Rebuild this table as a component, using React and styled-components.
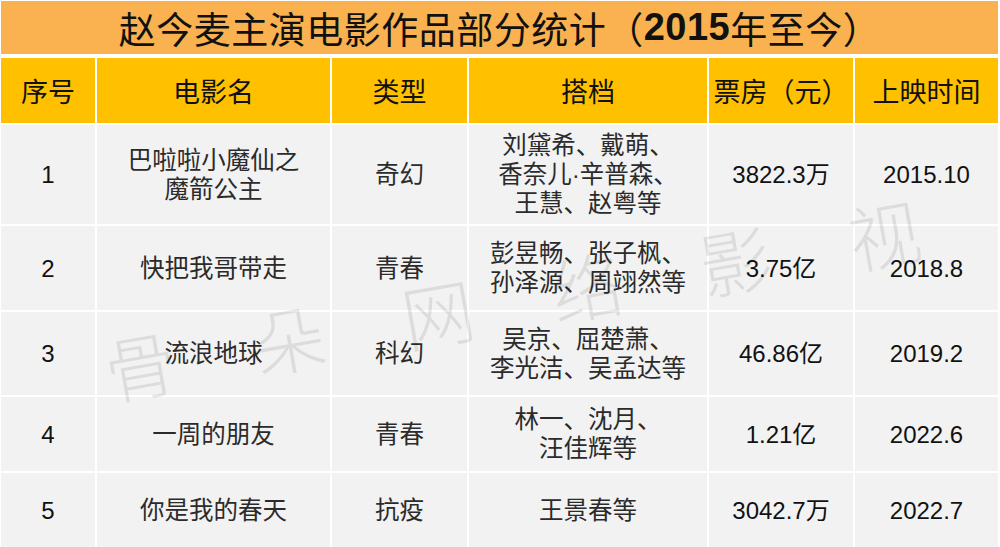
import React from "react";
import styled, { createGlobalStyle } from "styled-components";

const Global = createGlobalStyle`
  html, body { margin: 0; padding: 0; background: #ffffff; }
  body { font-family: "Liberation Sans", "Noto Sans CJK SC", sans-serif; }
`;

const Page = styled.div`
  position: relative;
  width: 1000px;
  height: 547px;
  overflow: hidden;
  padding: 1px 0 0 1px;
  box-sizing: border-box;
  background: #ffffff;
`;

const Title = styled.div`
  width: 997px;
  height: 53px;
  background: #f9b24f;
  display: flex;
  align-items: center;
  justify-content: center;
  font-family: "Noto Sans CJK SC", sans-serif;
  font-size: 37px;
  color: #111;
  letter-spacing: 0.5px;
  margin-bottom: 4px;
  b {
    font-family: "Liberation Sans", sans-serif;
    font-weight: 700;
    font-size: 38px;
  }
`;

const Grid = styled.div`
  display: grid;
  grid-template-columns: 94px 233px 135px 238px 144px 143px;
  grid-template-rows: 65px 99px 84px 83px 74px 74px;
  gap: 2px;
  width: 997px;
  background: #ffffff;
`;

const HeadCell = styled.div`
  background: #ffc000;
  display: flex;
  align-items: center;
  justify-content: center;
  font-family: "Noto Sans CJK SC", sans-serif;
  font-size: 27px;
  color: #111;
  white-space: nowrap;
`;

const Cell = styled.div`
  background: #f2f2f2;
  display: flex;
  align-items: center;
  justify-content: center;
  text-align: center;
  font-family: "Liberation Sans", "Noto Sans CJK SC", sans-serif;
  font-size: ${(p) => (p.$num ? "24px" : "24.5px")};
  line-height: 29px;
  color: ${(p) => (p.$num ? "#111" : "#2b2b2b")};
  white-space: nowrap;
`;

const Watermark = styled.div`
  position: absolute;
  left: 512px;
  top: 298px;
  transform: translate(-50%, -50%) rotate(-10deg);
  display: flex;
  gap: 79px;
  font-family: "Noto Sans CJK SC", sans-serif;
  font-weight: 300;
  font-size: 72px;
  line-height: 1;
  white-space: nowrap;
  color: rgba(0, 0, 0, 0.09);
  pointer-events: none;
`;

const heads = ["序号", "电影名", "类型", "搭档", "票房（元）", "上映时间"];

const rows = [
  ["1", ["巴啦啦小魔仙之", "魔箭公主"], "奇幻", ["刘黛希、戴萌、", "香奈儿·辛普森、", "王慧、赵粤等"], "3822.3万", "2015.10"],
  ["2", ["快把我哥带走"], "青春", ["彭昱畅、张子枫、", "孙泽源、周翊然等"], "3.75亿", "2018.8"],
  ["3", ["流浪地球"], "科幻", ["吴京、屈楚萧、", "李光洁、吴孟达等"], "46.86亿", "2019.2"],
  ["4", ["一周的朋友"], "青春", ["林一、沈月、", "汪佳辉等"], "1.21亿", "2022.6"],
  ["5", ["你是我的春天"], "抗疫", ["王景春等"], "3042.7万", "2022.7"],
];

const Lines = ({ lines }) => (
  <div>
    {lines.map((l, i) => (
      <div key={i}>{l}</div>
    ))}
  </div>
);

export default function App() {
  return (
    <>
      <Global />
      <Page>
        <Title>
          赵今麦主演电影作品部分统计（<b>2015</b>年至今）
        </Title>
        <Grid>
          {heads.map((h) => (
            <HeadCell key={h}>{h}</HeadCell>
          ))}
          {rows.map((r) => (
            <React.Fragment key={r[0]}>
              <Cell $num>{r[0]}</Cell>
              <Cell>
                <Lines lines={r[1]} />
              </Cell>
              <Cell>{r[2]}</Cell>
              <Cell>
                <Lines lines={r[3]} />
              </Cell>
              <Cell $num>{r[4]}</Cell>
              <Cell $num>{r[5]}</Cell>
            </React.Fragment>
          ))}
        </Grid>
        <Watermark>
          {"骨朵网络影视".split("").map((c) => (
            <span key={c}>{c}</span>
          ))}
        </Watermark>
      </Page>
    </>
  );
}
